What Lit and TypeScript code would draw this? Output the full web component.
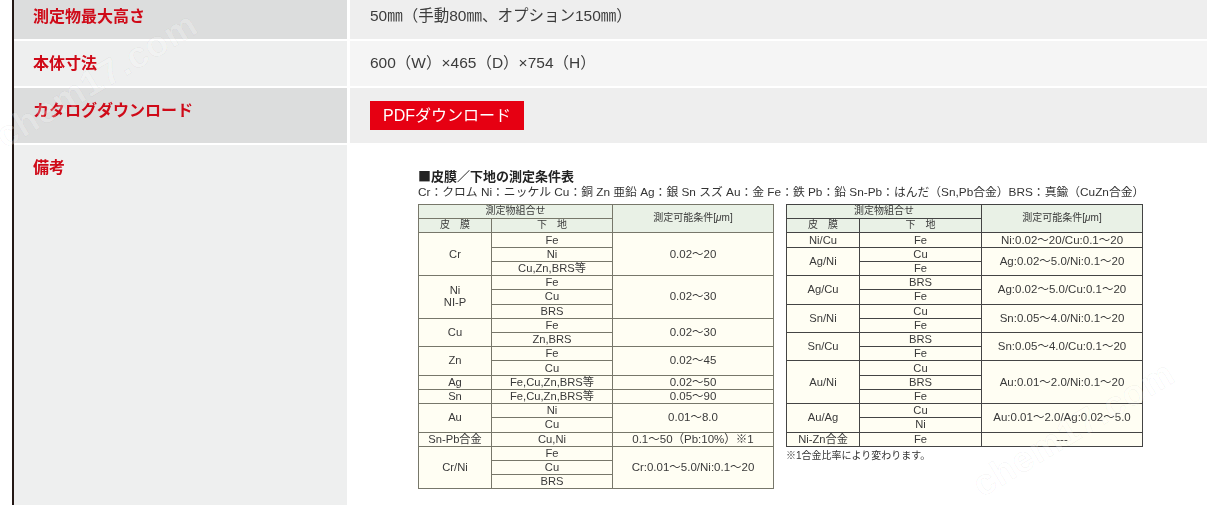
import { LitElement, html, css } from "lit";
import { customElement } from "lit/decorators.js";

type Group = { name: string[]; subs: string[]; cond: string; soft?: boolean; strongTop?: boolean };

const leftGroups: Group[] = [
  { name: ["Cr"], subs: ["Fe", "Ni", "Cu,Zn,BRS等"], cond: "0.02～20" },
  { name: ["Ni", "NI-P"], subs: ["Fe", "Cu", "BRS"], cond: "0.02～30" },
  { name: ["Cu"], subs: ["Fe", "Zn,BRS"], cond: "0.02～30" },
  { name: ["Zn"], subs: ["Fe", "Cu"], cond: "0.02～45", soft: true },
  { name: ["Ag"], subs: ["Fe,Cu,Zn,BRS等"], cond: "0.02～50", strongTop: true },
  { name: ["Sn"], subs: ["Fe,Cu,Zn,BRS等"], cond: "0.05～90" },
  { name: ["Au"], subs: ["Ni", "Cu"], cond: "0.01～8.0" },
  { name: ["Sn-Pb合金"], subs: ["Cu,Ni"], cond: "0.1～50（Pb:10%）※1" },
  { name: ["Cr/Ni"], subs: ["Fe", "Cu", "BRS"], cond: "Cr:0.01～5.0/Ni:0.1～20" },
];

const rightGroups: Group[] = [
  { name: ["Ni/Cu"], subs: ["Fe"], cond: "Ni:0.02～20/Cu:0.1～20" },
  { name: ["Ag/Ni"], subs: ["Cu", "Fe"], cond: "Ag:0.02～5.0/Ni:0.1～20", strongTop: true },
  { name: ["Ag/Cu"], subs: ["BRS", "Fe"], cond: "Ag:0.02～5.0/Cu:0.1～20" },
  { name: ["Sn/Ni"], subs: ["Cu", "Fe"], cond: "Sn:0.05～4.0/Ni:0.1～20" },
  { name: ["Sn/Cu"], subs: ["BRS", "Fe"], cond: "Sn:0.05～4.0/Cu:0.1～20", strongTop: true },
  { name: ["Au/Ni"], subs: ["Cu", "BRS", "Fe"], cond: "Au:0.01～2.0/Ni:0.1～20" },
  { name: ["Au/Ag"], subs: ["Cu", "Ni"], cond: "Au:0.01～2.0/Ag:0.02～5.0" },
  { name: ["Ni-Zn合金"], subs: ["Fe"], cond: "---" },
];

@customElement("app-root")
export class AppRoot extends LitElement {
  static styles = css`
    :host {
      display: block;
      position: relative;
      height: 505px;
      overflow: hidden;
      background: #fff;
      font-family: "Liberation Sans", "Noto Sans CJK JP", sans-serif;
    }
    .spec {
      margin-left: 12px;
      border-left: 2px solid #231815;
      height: 505px;
      display: grid;
      grid-template-columns: 333px 1fr;
      grid-template-rows: 39px 45px 55px 1fr;
      gap: 2px 3px;
      filter: blur(0.3px);
    }
    .th,
    .td {
      padding-top: 9px;
      box-sizing: border-box;
    }
    .th {
      padding-left: 19px;
      color: #cf0a18;
      font: bold 16px/24px "Noto Sans CJK JP", sans-serif;
    }
    .td {
      padding-top: 10px;
      padding-left: 20px;
      color: #3c3c3c;
      font-size: 15.5px;
      line-height: 24px;
    }
    .th.first {
      padding-top: 3px;
    }
    .td.first {
      padding-top: 4px;
    }
    .th.dark { background: #dcdddd; }
    .th.light { background: #eeefef; }
    .td.dark { background: #eeeeee; }
    .td.light { background: #f5f5f5; }
    .td.plain { background: #fff; padding: 0; }
    .td.action { padding-top: 13px; }
    .btn {
      display: block;
      width: 154px;
      height: 29px;
      background: #e60012;
      color: #fff;
      font-size: 16px;
      line-height: 30px;
      text-align: center;
    }
    .chart {
      padding: 23px 0 0 68px;
      color: #3a3a3a;
    }
    .title {
      font: bold 13px/15px "Noto Sans CJK JP", sans-serif;
      color: #222;
      height: 17px;
    }
    .elements {
      font-size: 11.8px;
      line-height: 14px;
      height: 19px;
      white-space: nowrap;
      color: #333;
    }
    .tables {
      display: flex;
      align-items: flex-start;
      gap: 12px;
    }
    table {
      border-collapse: collapse;
      table-layout: fixed;
      width: 356px;
      background: #fffef3;
      font-size: 11.2px;
    }
    table.wide { width: 357px; }
    col.c1 { width: 73px; }
    col.c2 { width: 121px; }
    col.c3 { width: 161px; }
    table.wide col.c2 { width: 122px; }
    tr { height: 14.22px; }
    td {
      border: 1px solid #77776a;
      padding: 0 0 1px;
      text-align: center;
      line-height: 12px;
      white-space: nowrap;
      overflow: hidden;
    }
    table.wide td { border-color: #444; }
    td.cond { font-size: 11.5px; }
    td.sub-next { border-top: 1px solid #222; }
    td.soft { border-top-color: #888; }
    tr.strong td { border-top: 1px solid #222; }
    thead td {
      background: #e9f1e6;
      font-size: 10px;
    }
    .note {
      margin-top: 2px;
      font-size: 10px;
      line-height: 14px;
      color: #333;
    }
    .mark {
      position: absolute;
      pointer-events: none;
      font: bold 36px/1 "Liberation Sans", sans-serif;
      letter-spacing: 1px;
      white-space: nowrap;
      color: rgba(255, 255, 255, 0.22);
      -webkit-text-stroke: 1px rgba(0, 0, 0, 0.04);
      transform-origin: left bottom;
      transform: rotate(-31deg);
    }
    .m1 { left: 8px; top: 118px; }
    .m2 { left: 985px; top: 467px; }
  `;

  private renderTable(groups: Group[], cls = "") {
    return html`
      <table class=${cls}>
        <colgroup><col class="c1" /><col class="c2" /><col class="c3" /></colgroup>
        <thead>
          <tr><td colspan="2">測定物組合せ</td><td rowspan="2">測定可能条件[<i>μ</i>m]</td></tr>
          <tr><td>皮　膜</td><td>下　地</td></tr>
        </thead>
        <tbody>
          ${groups.map((g) =>
            g.subs.map(
              (s, i) => html`
                <tr class=${i === 0 && g.strongTop ? "strong" : ""}>
                  ${i === 0
                    ? html`<td rowspan=${g.subs.length}>${g.name.map((n) => html`<div>${n}</div>`)}</td>`
                    : ""}
                  <td class=${i > 0 ? (g.soft ? "sub-next soft" : "sub-next") : ""}>${s}</td>
                  ${i === 0 ? html`<td class="cond" rowspan=${g.subs.length}>${g.cond}</td>` : ""}
                </tr>
              `,
            ),
          )}
        </tbody>
      </table>
    `;
  }

  render() {
    return html`
      <div class="spec">
        <div class="th dark first">測定物最大高さ</div>
        <div class="td dark first">50㎜（手動80㎜、オプション150㎜）</div>
        <div class="th light">本体寸法</div>
        <div class="td light">600（W）×465（D）×754（H）</div>
        <div class="th dark">カタログダウンロード</div>
        <div class="td dark action"><a class="btn">PDFダウンロード</a></div>
        <div class="th light">備考</div>
        <div class="td plain">
          <div class="chart">
            <div class="title">■皮膜／下地の測定条件表</div>
            <div class="elements">
              Cr：クロム Ni：ニッケル Cu：銅 Zn 亜鉛 Ag：銀 Sn スズ Au：金 Fe：鉄 Pb：鉛 Sn-Pb：はんだ（Sn,Pb合金）BRS：真鍮（CuZn合金）
            </div>
            <div class="tables">
              ${this.renderTable(leftGroups)}
              <div>
                ${this.renderTable(rightGroups, "wide")}
                <div class="note">※1合金比率により変わります。</div>
              </div>
            </div>
          </div>
        </div>
      </div>
      <div class="mark m1">chem17.com</div>
      <div class="mark m2">chem17.com</div>
    `;
  }
}
